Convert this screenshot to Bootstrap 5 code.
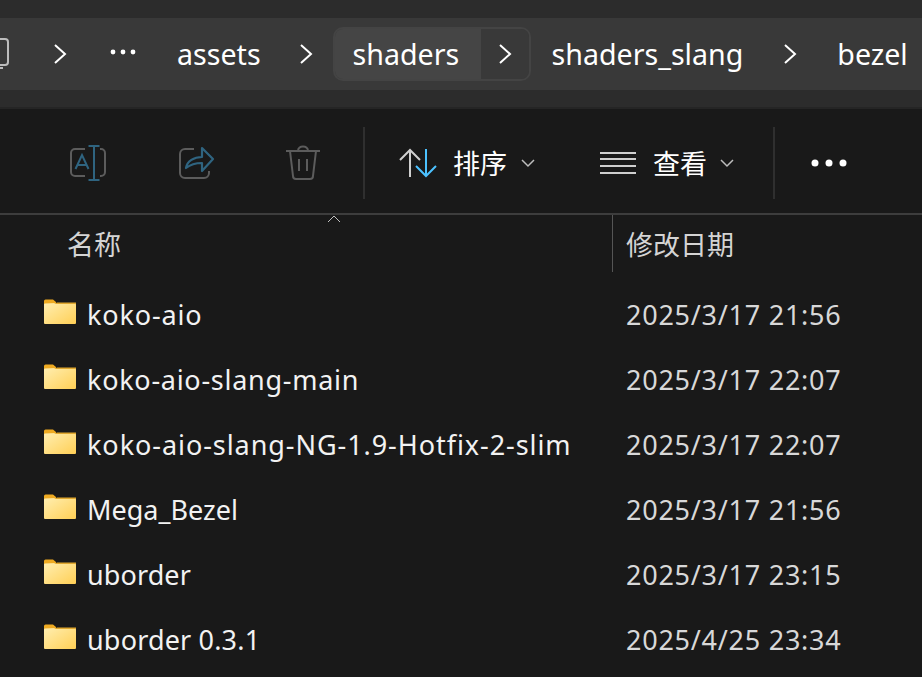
<!DOCTYPE html>
<html lang="zh-CN">
<head>
<meta charset="utf-8">
<title>bezel</title>
<link href="https://cdn.jsdelivr.net/npm/bootstrap@5.3.0/dist/css/bootstrap.min.css" rel="stylesheet">
<style>
html,body{height:100%}
body{margin:0;width:922px;height:677px;overflow:hidden;background:#191919;color:#fff;font-family:"Noto Sans","Noto Sans CJK SC",sans-serif}
.addr-outer{height:107px;background:#2c2c2c;padding-top:18px;border-bottom:0}
.addr-band{height:72px;background:#393939;overflow:hidden;position:relative}
.crumb{font-size:28.6px;line-height:72px;white-space:nowrap;color:#fff}
.chev{display:block;flex:none}
.pill{height:54px;margin-top:9px;border-radius:10px;border:2px solid #444;width:198px;overflow:hidden;flex:none}
.pill-l{width:146px;background:#454545;padding-left:18px;line-height:50px;font-size:28.6px}
.pill-r{flex:1;background:#393939}
.rule-a{height:2px;background:#252525}
.tools{height:104px;background:#191919;padding-top:3px}
.rule-b{height:2px;background:#3d3d3d}
.vsep{width:2px;height:72px;background:#2f2f2f;flex:none}
.tool-txt{font-family:"Noto Sans CJK SC",sans-serif;font-size:27px;font-weight:400;line-height:1;color:#fff}
.head-row{height:57px;position:relative}
.head-name{width:613px;padding-left:67px;border-right:1px solid #555;flex:none}
.head-date{padding-left:13px}
.head-txt{font-family:"Noto Sans CJK SC",sans-serif;font-size:27px;line-height:57px;color:#d4d4d4}
.sort-caret{position:absolute;left:327px;top:0}
.rows{padding-top:11px}
.f-row{height:65px}
.f-name{width:626px;flex:none;padding-left:44px;gap:11px;font-size:27px;color:#f2f2f2;white-space:nowrap}
.f-name svg{margin-top:-7px}
.f-date{font-size:27px;letter-spacing:.75px;color:#d8d8d8;white-space:nowrap}
.ls-a{letter-spacing:.85px}
.ls-b{letter-spacing:.72px}
.ls-c{letter-spacing:.94px}
.ls-d{letter-spacing:.1px}
.ls-e{letter-spacing:.17px}
</style>
</head>
<body>
<div class="addr-outer">
  <div class="addr-band d-flex">
    <svg class="chev" width="9" height="72" viewBox="0 0 9 72"><path d="M-6 21h11a3 3 0 0 1 3 3v20a3 3 0 0 1-3 3H-6M-1 50H3" fill="none" stroke="#bdbdbd" stroke-width="2"/></svg>
    <svg class="chev" style="margin-left:44px" width="14" height="72" viewBox="0 0 14 72"><path d="M2 27l10 9-10 9" fill="none" stroke="#fff" stroke-width="2"/></svg>
    <svg class="chev" style="margin-left:42px" width="28" height="72" viewBox="0 0 28 72"><g fill="#fff"><circle cx="4" cy="34" r="2.4"/><circle cx="14" cy="34" r="2.4"/><circle cx="24" cy="34" r="2.4"/></g></svg>
    <div class="crumb" style="margin-left:40px">assets</div>
    <svg class="chev" style="margin-left:38px" width="14" height="72" viewBox="0 0 14 72"><path d="M2 27l10 9-10 9" fill="none" stroke="#fff" stroke-width="2"/></svg>
    <div class="pill d-flex" style="margin-left:20px">
      <div class="pill-l">shaders</div>
      <div class="pill-r d-flex justify-content-center"><svg width="14" height="50" viewBox="0 0 14 50"><path d="M2 16l10 9-10 9" fill="none" stroke="#fff" stroke-width="2"/></svg></div>
    </div>
    <div class="crumb" style="margin-left:21px">shaders_slang</div>
    <svg class="chev" style="margin-left:40px" width="14" height="72" viewBox="0 0 14 72"><path d="M2 27l10 9-10 9" fill="none" stroke="#fff" stroke-width="2"/></svg>
    <div class="crumb" style="margin-left:40px">bezel</div>
  </div>
</div>
<div class="rule-a"></div>
<div class="tools d-flex align-items-center">
  <svg style="margin-left:69px" width="38" height="38" viewBox="0 0 38 38"><path d="M16 5H6a4 4 0 0 0-4 4v19a4 4 0 0 0 4 4h10M31 5h1a4 4 0 0 1 4 4v19a4 4 0 0 1-4 4h-1" fill="none" stroke="#5c5c5c" stroke-width="2"/><path d="M6.500 25L13 11l6.500 14M8.500 21h9M25 2v34M19.500 2h11M19.500 36h11" fill="none" stroke="#2f6480" stroke-width="2"/></svg>
  <svg style="margin-left:72px" width="36" height="36" viewBox="0 0 36 36"><path d="M15 4H6a5 5 0 0 0-5 5v19a5 5 0 0 0 5 5h19a5 5 0 0 0 5-5v-2" fill="none" stroke="#5c5c5c" stroke-width="2"/><path d="M7 23c1-7 8-11 16-11V3l11 11-11 12v-8c-6 0-11 1-16 5z" fill="none" stroke="#2f6480" stroke-width="2.200" stroke-linejoin="round"/></svg>
  <svg style="margin-left:71px" width="34" height="36" viewBox="0 0 34 36"><path d="M0 6h34M4 6l3 25a3 3 0 0 0 3 3h14a3 3 0 0 0 3-3l3-25M12 6c0-6 10-6 10 0M13 14v12M21 14v12" fill="none" stroke="#5c5c5c" stroke-width="2"/></svg>
  <div class="vsep" style="margin-left:43px"></div>
  <svg style="margin-left:34px" width="38" height="30" viewBox="0 0 38 30"><path d="M11 29V2M1 12L11 2l10 10" fill="none" stroke="#d0d0d0" stroke-width="2"/><path d="M27 1v27M17 18l10 10 10-10" fill="none" stroke="#4cc2ff" stroke-width="2"/></svg>
  <div class="tool-txt" style="margin-left:16px">排序</div>
  <svg style="margin-left:14px" width="14" height="10" viewBox="0 0 14 10"><path d="M1 2l6 6 6-6" fill="none" stroke="#bdbdbd" stroke-width="1.500"/></svg>
  <svg style="margin-left:65px" width="36" height="24" viewBox="0 0 36 24"><path d="M0 2h36M0 8h36M0 15h36M0 22h36" fill="none" stroke="#cfcfcf" stroke-width="2"/></svg>
  <div class="tool-txt" style="margin-left:17px">查看</div>
  <svg style="margin-left:13px" width="14" height="10" viewBox="0 0 14 10"><path d="M1 2l6 6 6-6" fill="none" stroke="#bdbdbd" stroke-width="1.500"/></svg>
  <div class="vsep" style="margin-left:39px"></div>
  <svg style="margin-left:36px" width="36" height="8" viewBox="0 0 36 8"><g fill="#fff"><circle cx="4" cy="4" r="3.500"/><circle cx="18" cy="4" r="3.500"/><circle cx="32" cy="4" r="3.500"/></g></svg>
</div>
<div class="rule-b"></div>
<div class="head-row d-flex">
  <svg class="sort-caret" width="14" height="8" viewBox="0 0 14 8"><path d="M1 7l6-6 6 6" fill="none" stroke="#c0c0c0" stroke-width="1"/></svg>
  <div class="head-name head-txt">名称</div>
  <div class="head-date head-txt">修改日期</div>
</div>
<div class="rows">
  <div class="f-row d-flex align-items-center">
    <div class="f-name d-flex align-items-center"><svg width="32" height="26" viewBox="0 0 32 26"><use href="#fold"/></svg><span class="ls-a">koko-aio</span></div>
    <div class="f-date">2025/3/17 21:56</div>
  </div>
  <div class="f-row d-flex align-items-center">
    <div class="f-name d-flex align-items-center"><svg width="32" height="26" viewBox="0 0 32 26"><use href="#fold"/></svg><span class="ls-b">koko-aio-slang-main</span></div>
    <div class="f-date">2025/3/17 22:07</div>
  </div>
  <div class="f-row d-flex align-items-center">
    <div class="f-name d-flex align-items-center"><svg width="32" height="26" viewBox="0 0 32 26"><use href="#fold"/></svg><span class="ls-c">koko-aio-slang-NG-1.9-Hotfix-2-slim</span></div>
    <div class="f-date">2025/3/17 22:07</div>
  </div>
  <div class="f-row d-flex align-items-center">
    <div class="f-name d-flex align-items-center"><svg width="32" height="26" viewBox="0 0 32 26"><use href="#fold"/></svg><span>Mega_Bezel</span></div>
    <div class="f-date">2025/3/17 21:56</div>
  </div>
  <div class="f-row d-flex align-items-center">
    <div class="f-name d-flex align-items-center"><svg width="32" height="26" viewBox="0 0 32 26"><use href="#fold"/></svg><span class="ls-d">uborder</span></div>
    <div class="f-date">2025/3/17 23:15</div>
  </div>
  <div class="f-row d-flex align-items-center">
    <div class="f-name d-flex align-items-center"><svg width="32" height="26" viewBox="0 0 32 26"><use href="#fold"/></svg><span class="ls-e">uborder 0.3.1</span></div>
    <div class="f-date">2025/4/25 23:34</div>
  </div>
</div>
<svg width="0" height="0" class="d-block"><defs>
<linearGradient id="fg" x1="0" y1="0" x2="1" y2="1"><stop offset="0" stop-color="#ffeeb0"/><stop offset="1" stop-color="#ffcf55"/></linearGradient>
<g id="fold"><path d="M0 2a1.500 1.500 0 0 1 1.500-1.500H9l3 2.500v4H0z" fill="#eeaa22"/><path d="M0 7V5.500a1 1 0 0 1 1-1L12 4l19 .5a1 1 0 0 1 1 1V24a1 1 0 0 1-1 1H1a1 1 0 0 1-1-1z" fill="url(#fg)"/><path d="M0 5h10l3-1.500H32V5H0z" fill="#e0a72e"/></g>
</defs></svg>
</body>
</html>
